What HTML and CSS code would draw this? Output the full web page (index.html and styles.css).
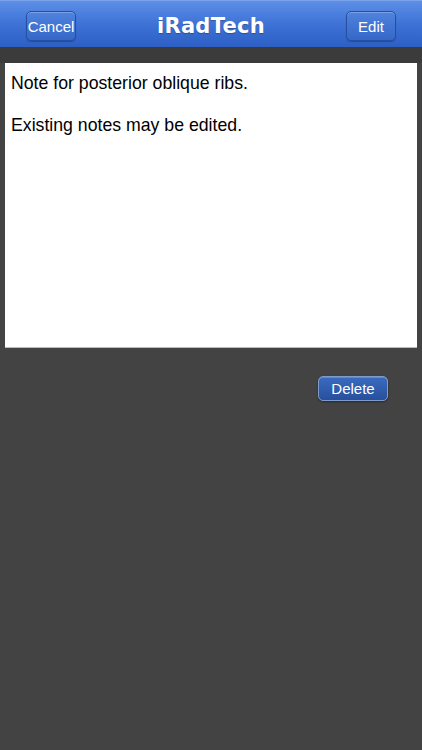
FILE: index.html
```html
<!DOCTYPE html>
<html>
<head>
<meta charset="utf-8">
<link rel="stylesheet" href="styles.css">
</head>
<body>
<div class="app">
  <header class="navbar">
    <button class="nav-btn">Cancel</button>
    <h1 class="title">iRadTech</h1>
    <button class="nav-btn">Edit</button>
  </header>
  <div class="shade"></div>
  <main class="content">
    <div class="note">
      <p>Note for posterior oblique ribs.</p>
      <p>Existing notes may be edited.</p>
    </div>
    <div class="actions">
      <button class="delete-btn">Delete</button>
    </div>
  </main>
</div>
</body>
</html>
```
FILE: styles.css
```css
html, body {
  margin: 0;
  padding: 0;
  background: #434343;
  font-family: "Liberation Sans", Arial, sans-serif;
}
.app {
  width: 422px;
  height: 750px;
  background: #434343;
  overflow: hidden;
}
.navbar {
  height: 47px;
  box-sizing: border-box;
  display: flex;
  align-items: center;
  justify-content: space-between;
  padding: 4px 26px 0;
  background: linear-gradient(#5d8fe6 0%, #3e72d6 50%, #2d5fc4 100%);
  border-top: 1px solid #7aa3ec;
}
.nav-btn {
  width: 50px;
  height: 30px;
  border: 1px solid #284f9f;
  border-radius: 5px;
  background: linear-gradient(#4f83dd, #3567c8);
  box-shadow: inset 0 1px 0 rgba(255,255,255,0.25), 0 1px 1px rgba(0,0,0,0.25);
  color: #fff;
  font-family: "Liberation Sans", Arial, sans-serif;
  font-size: 15px;
  padding: 0;
}
.title {
  margin: 0;
  color: #fff;
  font-family: "DejaVu Sans", sans-serif;
  font-weight: bold;
  font-size: 21px;
  letter-spacing: 0.3px;
  text-shadow: 0 1px 1px rgba(0,0,0,0.25);
}
.shade {
  height: 16px;
  background: #3b3b3b;
}
.content {
  padding: 0 5px;
}
.note {
  background: #fff;
  height: 285px;
  box-sizing: border-box;
  padding: 10px 6px;
  color: #000;
  font-family: "Liberation Sans", Arial, sans-serif;
  font-size: 17.7px;
  line-height: 21px;
  border-bottom: 1px solid #bbb;
}
.note p {
  margin: 0 0 21px 0;
}
.actions {
  display: flex;
  justify-content: flex-end;
  padding: 28px 29px 0 0;
}
.delete-btn {
  width: 70px;
  height: 25px;
  border: 1px solid #7f9bc9;
  border-radius: 5px;
  background: linear-gradient(#3a6bc0, #284f9c);
  box-shadow: 0 1px 2px rgba(0,0,0,0.4), inset 0 1px 0 rgba(255,255,255,0.2);
  color: #fff;
  font-family: "Liberation Sans", Arial, sans-serif;
  font-size: 15px;
  padding: 0;
}
```
